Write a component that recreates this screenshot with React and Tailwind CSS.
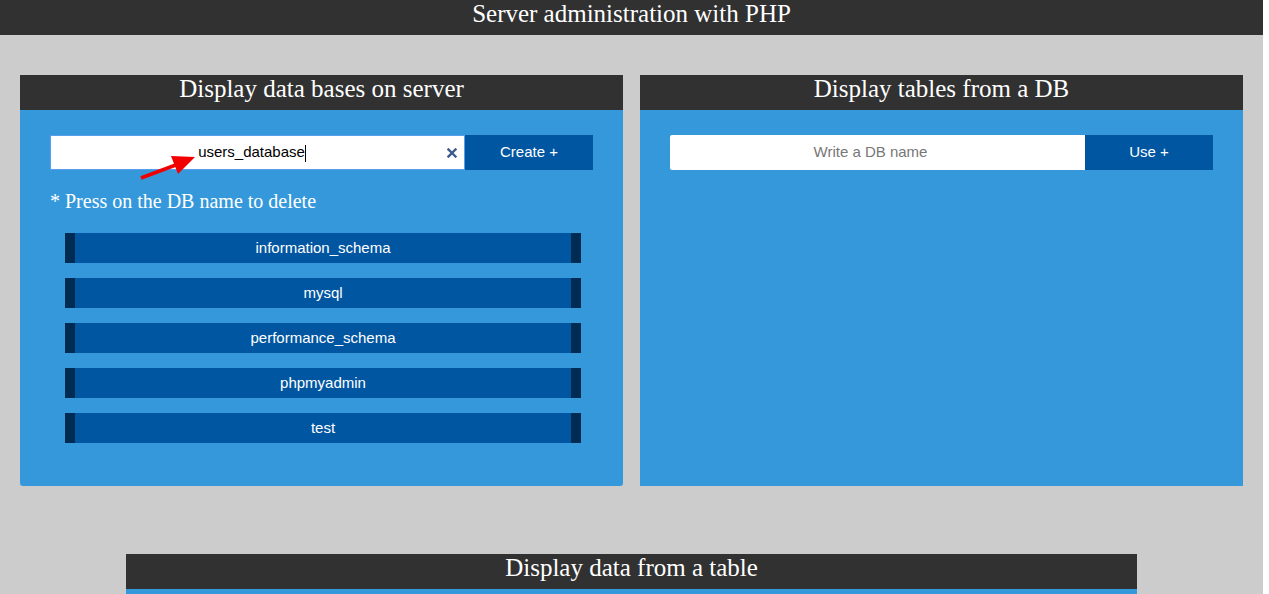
import React from 'react';

const databases = ['information_schema', 'mysql', 'performance_schema', 'phpmyadmin', 'test'];

function PanelHeader({ title }) {
  return (
    <div className="h-[35px] bg-[#313131] text-center text-[25px] leading-[28px] text-white" style={{ fontFamily: '"Liberation Serif", serif' }}>
      {title}
    </div>
  );
}

function ClearIcon() {
  return (
    <svg width="10" height="10" viewBox="0 0 10 10" className="text-[#3b5b8c]">
      <path d="M1.5 1.5 L8.5 8.5 M8.5 1.5 L1.5 8.5" stroke="currentColor" strokeWidth="2.4" strokeLinecap="square" />
    </svg>
  );
}

function Arrow() {
  return (
    <svg className="absolute left-[120px] top-[40px]" width="60" height="32" viewBox="0 0 60 32">
      <line x1="1" y1="28" x2="37" y2="14.5" stroke="#f20000" strokeWidth="3.5" />
      <polygon points="55,7 31,6 38,24" fill="#f20000" />
    </svg>
  );
}

export default function App() {
  return (
    <div className="w-[1263px] min-h-[594px] bg-[#cccccc]" style={{ fontFamily: '"Liberation Sans", Arial, sans-serif' }}>
      {/* Top bar */}
      <div className="h-[35px] bg-[#313131] text-center text-[25px] leading-[28px] text-white" style={{ fontFamily: '"Liberation Serif", serif' }}>
        Server administration with PHP
      </div>

      <div className="flex justify-between px-[20px] pt-[40px]">
        {/* Data bases panel */}
        <div className="w-[603px]">
          <PanelHeader title="Display data bases on server" />
          <div className="relative h-[376px] rounded-b-[3px] bg-[#3598db] px-[30px] pt-[25px]">
            <div className="flex h-[35px]">
              <div className="relative flex w-[415px] items-center justify-center border border-[#5b9ef0] bg-white text-[15px] text-black">
                <span className="mr-[12px]">users_database</span>
                <span className="absolute left-[254px] top-[9px] h-[17px] w-px bg-black" />
                <span className="absolute right-[7px] top-[12px]"><ClearIcon /></span>
              </div>
              <button className="w-[128px] bg-[#0156a1] text-[15px] text-white">Create +</button>
            </div>
            <Arrow />
            <p className="mt-[19px] text-[20px] leading-[24px] text-white" style={{ fontFamily: '"Liberation Serif", serif' }}>
              * Press on the DB name to delete
            </p>
            <div className="mt-[20px] flex flex-col gap-[15px] pl-[15px] pr-[12px]">
              {databases.map((db) => (
                <div key={db} className="h-[30px] border-x-[10px] border-[#002b52] bg-[#0156a1] text-center text-[15px] leading-[30px] text-white">
                  {db}
                </div>
              ))}
            </div>
          </div>
        </div>

        {/* Tables panel */}
        <div className="w-[603px]">
          <PanelHeader title="Display tables from a DB" />
          <div className="h-[376px] bg-[#3598db] px-[30px] pt-[25px]">
            <div className="flex h-[35px]">
              <div className="flex w-[415px] items-center justify-center rounded-l-[2px] bg-white pr-[14px] text-[15px] text-[#777777]">
                Write a DB name
              </div>
              <button className="w-[128px] bg-[#0156a1] text-[15px] text-white">Use +</button>
            </div>
          </div>
        </div>
      </div>

      {/* Data from table panel */}
      <div className="mx-auto mt-[68px] w-[1011px]">
        <PanelHeader title="Display data from a table" />
        <div className="h-[5px] bg-[#3598db]" />
      </div>
    </div>
  );
}
